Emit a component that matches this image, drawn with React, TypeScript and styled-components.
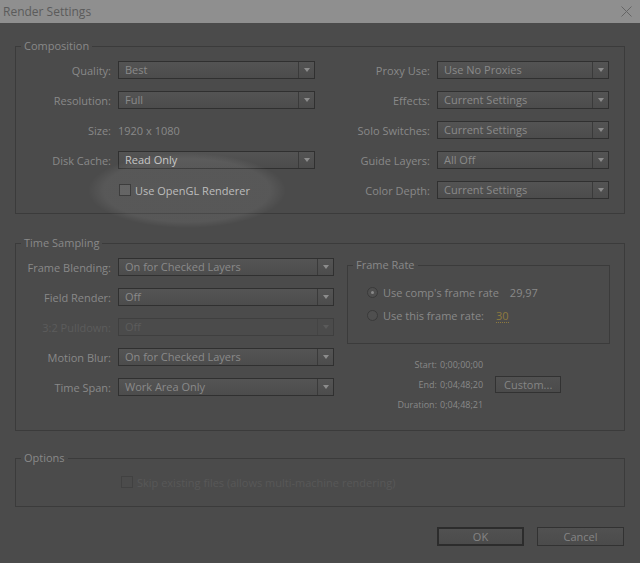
import styled, { createGlobalStyle } from "styled-components";

const GlobalStyle = createGlobalStyle`
  html, body {
    margin: 0;
    padding: 0;
    background: #4b4b4b;
  }
  body {
    font-family: "Open Sans", "Liberation Sans", sans-serif;
  }
`;

const Dialog = styled.div`
  position: relative;
  width: 640px;
  height: 563px;
  background: #4b4b4b;
  overflow: hidden;
  font-size: 11px;
  color: #898989;
`;

const TitleBar = styled.div`
  height: 23px;
  display: flex;
  align-items: center;
  justify-content: space-between;
  padding: 0 8px 0 3px;
  background: #8f8f8f;
`;

const Title = styled.span`
  font-size: 12px;
  color: #5b5b5b;
`;

const Body = styled.div`
  display: flex;
  flex-direction: column;
  padding: 16px 15px 0;
`;

const Group = styled.fieldset<{ $mt?: number; $width?: number }>`
  margin: ${(p) => p.$mt ?? 0}px 0 0;
  padding: 0;
  border: 1px solid #3b3b3b;
  min-width: 0;
  box-sizing: border-box;
  width: ${(p) => (p.$width ? `${p.$width}px` : "auto")};
`;

const GroupTitle = styled.legend`
  margin-left: 5px;
  padding: 0 3px;
  font-size: 11px;
  line-height: 14px;
  color: #898989;
`;

const Columns = styled.div<{ $pad: string; $gap: number }>`
  display: flex;
  align-items: flex-start;
  gap: ${(p) => p.$gap}px;
  padding: ${(p) => p.$pad};
`;

const FieldGrid = styled.div<{ $label: number; $control: number; $row: number }>`
  display: grid;
  grid-template-columns: ${(p) => p.$label}px ${(p) => p.$control}px;
  grid-auto-rows: ${(p) => p.$row}px;
  column-gap: 7px;
  align-items: center;
`;

const FieldLabel = styled.div<{ $disabled?: boolean }>`
  text-align: right;
  white-space: nowrap;
  color: ${(p) => (p.$disabled ? "#5c5c5c" : "#898989")};
`;

const StaticValue = styled.div`
  color: #898989;
`;

const DropdownBox = styled.div<{ $disabled?: boolean }>`
  height: 18px;
  box-sizing: border-box;
  display: flex;
  align-items: stretch;
  border: 1px solid ${(p) => (p.$disabled ? "#3f3f3f" : "#303030")};
  background: ${(p) =>
    p.$disabled ? "#4b4b4b" : "linear-gradient(#545454, #4c4c4c)"};
`;

const DropdownValue = styled.span<{ $disabled?: boolean; $bright?: boolean }>`
  flex: 1;
  padding-left: 6px;
  line-height: 16px;
  white-space: nowrap;
  overflow: hidden;
  color: ${(p) => (p.$disabled ? "#5c5c5c" : p.$bright ? "#c4c4c4" : "#8a8a8a")};
`;

const DropdownArrow = styled.span<{ $disabled?: boolean }>`
  width: 15px;
  border-left: 1px solid ${(p) => (p.$disabled ? "#444" : "#3a3a3a")};
  display: flex;
  align-items: center;
  justify-content: center;
  &::after {
    content: "";
    border-left: 3.5px solid transparent;
    border-right: 3.5px solid transparent;
    border-top: 4px solid ${(p) => (p.$disabled ? "#5a5a5a" : "#8c8c8c")};
  }
`;

const CheckRow = styled.label<{ $disabled?: boolean; $bright?: boolean }>`
  display: flex;
  align-items: center;
  gap: 4px;
  height: 14px;
  white-space: nowrap;
  color: ${(p) => (p.$disabled ? "#585858" : p.$bright ? "#b8b8b8" : "#898989")};
`;

const CheckBox = styled.span<{ $disabled?: boolean }>`
  width: 12px;
  height: 12px;
  margin-left: 1px;
  box-sizing: border-box;
  border: 1px solid ${(p) => (p.$disabled ? "#414141" : "#2e2e2e")};
  background: ${(p) => (p.$disabled ? "#4b4b4b" : "#595959")};
`;

const RadioList = styled.div`
  padding: 9px 0 16px 19px;
`;

const RadioRow = styled.div`
  display: flex;
  align-items: center;
  height: 23px;
  white-space: nowrap;
  color: #898989;
`;

const Radio = styled.span<{ $checked?: boolean }>`
  width: 11px;
  height: 11px;
  margin-right: 5px;
  box-sizing: border-box;
  border-radius: 50%;
  border: 1px solid #3a3a3a;
  background: #4f4f4f;
  display: flex;
  align-items: center;
  justify-content: center;
  &::after {
    content: "";
    display: ${(p) => (p.$checked ? "block" : "none")};
    width: 3px;
    height: 3px;
    border-radius: 50%;
    background: #8a8a8a;
  }
`;

const RateValue = styled.span<{ $editable?: boolean; $gap: number }>`
  margin-left: ${(p) => p.$gap}px;
  color: ${(p) => (p.$editable ? "#8e7a3e" : "#898989")};
  border-bottom: ${(p) => (p.$editable ? "1px dotted #8e7a3e" : "none")};
  line-height: 13px;
`;

const RightColumn = styled.div`
  display: flex;
  flex-direction: column;
  padding-top: 6px;
`;

const TimeGrid = styled.div`
  display: grid;
  grid-template-columns: 90px auto;
  grid-auto-rows: 20px;
  column-gap: 3px;
  align-items: center;
  margin-top: 10px;
  font-size: 9px;
`;

const TimeLabel = styled.div`
  text-align: right;
  color: #898989;
`;

const TimeValue = styled.div`
  display: flex;
  align-items: center;
  gap: 12px;
  color: #898989;
`;

const Button = styled.button<{ $width: number; $height: number; $default?: boolean }>`
  width: ${(p) => p.$width}px;
  height: ${(p) => p.$height}px;
  box-sizing: border-box;
  padding: 0;
  font-family: inherit;
  font-size: 11px;
  color: #858585;
  background: linear-gradient(#515151, #4b4b4b);
  border: ${(p) => (p.$default ? "2px solid #2c2c2c" : "1px solid #323232")};
`;

const OptionsBody = styled.div`
  padding: 10px 0 17px 104px;
`;

const ButtonRow = styled.div`
  display: flex;
  justify-content: flex-end;
  gap: 13px;
  margin-top: 20px;
  padding-right: 1px;
`;

const Spotlight = styled.div`
  position: absolute;
  left: 88px;
  top: 153px;
  width: 198px;
  height: 75px;
  pointer-events: none;
  background: radial-gradient(
    closest-side,
    rgba(255, 255, 255, 0.07) 84%,
    rgba(255, 255, 255, 0) 100%
  );
`;

type DropdownProps = { value: string; disabled?: boolean; bright?: boolean };

const Dropdown = ({ value, disabled, bright }: DropdownProps) => (
  <DropdownBox $disabled={disabled}>
    <DropdownValue $disabled={disabled} $bright={bright}>
      {value}
    </DropdownValue>
    <DropdownArrow $disabled={disabled} />
  </DropdownBox>
);

const CloseIcon = () => (
  <svg width="11" height="11" viewBox="0 0 11 11">
    <path d="M0.5 0.5 L10.5 10.5 M10.5 0.5 L0.5 10.5" stroke="#656565" strokeWidth="1" />
  </svg>
);

const compLeft = [
  { label: "Quality:", value: "Best" },
  { label: "Resolution:", value: "Full" },
];

const compRight = [
  { label: "Proxy Use:", value: "Use No Proxies" },
  { label: "Effects:", value: "Current Settings" },
  { label: "Solo Switches:", value: "Current Settings" },
  { label: "Guide Layers:", value: "All Off" },
  { label: "Color Depth:", value: "Current Settings" },
];

const timeRows = [
  { label: "Frame Blending:", value: "On for Checked Layers" },
  { label: "Field Render:", value: "Off" },
  { label: "3:2 Pulldown:", value: "Off", disabled: true },
  { label: "Motion Blur:", value: "On for Checked Layers" },
  { label: "Time Span:", value: "Work Area Only" },
];

export default function App() {
  return (
    <>
      <GlobalStyle />
      <Dialog>
        <TitleBar>
          <Title>Render Settings</Title>
          <CloseIcon />
        </TitleBar>
        <Body>
          <Group>
            <GroupTitle>Composition</GroupTitle>
            <Columns $pad="2px 0 8px" $gap={15}>
              <FieldGrid $label={95} $control={197} $row={30}>
                {compLeft.map((r) => (
                  <>
                    <FieldLabel key={r.label}>{r.label}</FieldLabel>
                    <Dropdown key={r.value + r.label} value={r.value} />
                  </>
                ))}
                <FieldLabel>Size:</FieldLabel>
                <StaticValue>1920 x 1080</StaticValue>
                <FieldLabel>Disk Cache:</FieldLabel>
                <Dropdown value="Read Only" bright />
                <span />
                <CheckRow $bright>
                  <CheckBox />
                  Use OpenGL Renderer
                </CheckRow>
              </FieldGrid>
              <FieldGrid $label={100} $control={172} $row={30}>
                {compRight.map((r) => (
                  <>
                    <FieldLabel key={r.label}>{r.label}</FieldLabel>
                    <Dropdown key={r.value + r.label} value={r.value} />
                  </>
                ))}
              </FieldGrid>
            </Columns>
          </Group>

          <Group $mt={22}>
            <GroupTitle>Time Sampling</GroupTitle>
            <Columns $pad="2px 0 16px" $gap={13}>
              <FieldGrid $label={95} $control={216} $row={30}>
                {timeRows.map((r) => (
                  <>
                    <FieldLabel key={r.label} $disabled={r.disabled}>
                      {r.label}
                    </FieldLabel>
                    <Dropdown key={r.label + "dd"} value={r.value} disabled={r.disabled} />
                  </>
                ))}
              </FieldGrid>
              <RightColumn>
                <Group $width={263}>
                  <GroupTitle>Frame Rate</GroupTitle>
                  <RadioList>
                    <RadioRow>
                      <Radio $checked />
                      Use comp's frame rate
                      <RateValue $gap={11}>29,97</RateValue>
                    </RadioRow>
                    <RadioRow>
                      <Radio />
                      Use this frame rate:
                      <RateValue $gap={12} $editable>
                        30
                      </RateValue>
                    </RadioRow>
                  </RadioList>
                </Group>
                <TimeGrid>
                  <TimeLabel>Start:</TimeLabel>
                  <TimeValue>0;00;00;00</TimeValue>
                  <TimeLabel>End:</TimeLabel>
                  <TimeValue>
                    0;04;48;20
                    <Button $width={66} $height={17}>
                      Custom...
                    </Button>
                  </TimeValue>
                  <TimeLabel>Duration:</TimeLabel>
                  <TimeValue>0;04;48;21</TimeValue>
                </TimeGrid>
              </RightColumn>
            </Columns>
          </Group>

          <Group $mt={20}>
            <GroupTitle>Options</GroupTitle>
            <OptionsBody>
              <CheckRow $disabled>
                <CheckBox $disabled />
                Skip existing files (allows multi-machine rendering)
              </CheckRow>
            </OptionsBody>
          </Group>

          <ButtonRow>
            <Button $width={87} $height={19} $default>
              OK
            </Button>
            <Button $width={87} $height={19}>
              Cancel
            </Button>
          </ButtonRow>
        </Body>
        <Spotlight />
      </Dialog>
    </>
  );
}
